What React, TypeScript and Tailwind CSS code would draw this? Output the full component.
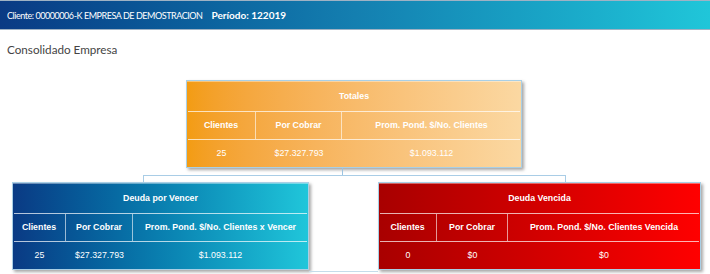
import React from "react";

type BoxProps = {
    title: string;
    headers: string[];
    values: string[];
    bg: string;
    cols: string;
    width: string;
};

function Box({ title, headers, values, bg, cols, width }: BoxProps) {
    return (
        <div className={`${width} ${bg} h-[88px] border border-[#a9cfe5] shadow-[2px_2px_3px_rgba(0,0,0,0.35)] flex flex-col text-white font-['Liberation_Sans',Arial,sans-serif] text-[8.8px]`}>
            <div className="h-[30px] flex items-center justify-center font-bold border-t border-white/40">{title}</div>
            <div className="h-px mx-px bg-white/70" />
            <div className={`grid ${cols} h-[27px] font-bold`}>
                {headers.map((h, i) => (
                    <div key={h} className={`flex items-center justify-center ${i < headers.length - 1 ? "border-r border-white/60" : ""}`}>
                        {h}
                    </div>
                ))}
            </div>
            <div className="h-px mx-px bg-white/70" />
            <div className={`grid ${cols} flex-1`}>
                {values.map((v, i) => (
                    <div key={i} className="flex items-center justify-center">{v}</div>
                ))}
            </div>
        </div>
    );
}

export default function App() {
    return (
        <div className="w-[710px] h-[274px] bg-white overflow-hidden">
            <div className="h-[30px] border-t border-[#9fb2c4] border-b border-[#5fd2e2] bg-gradient-to-r from-[#0a3a84] via-[#147fb0] to-[#20c6d9] flex items-center px-[7px] pt-px text-white font-['Lato',sans-serif]">
                <span className="text-[9px] tracking-[-0.45px]">Cliente: 00000006-K EMPRESA DE DEMOSTRACION</span>
                <span className="ml-[9px] text-[10px] font-bold">Período: 122019</span>
            </div>

            <div className="mt-[9px] px-[7px] leading-[20px] text-[11.7px] text-[#444] font-['Lato',sans-serif]">
                Consolidado Empresa
            </div>

            <div className="mt-[21px] ml-[186px]">
                <Box
                    title="Totales"
                    headers={["Clientes", "Por Cobrar", "Prom. Pond. $/No. Clientes"]}
                    values={["25", "$27.327.793", "$1.093.112"]}
                    bg="bg-gradient-to-r from-[#f39c12] to-[#fbd8a2]"
                    cols="grid-cols-[69px_86px_1fr]"
                    width="w-[336px]"
                />
            </div>

            {/* connectors */}
            <div className="ml-[342px] w-px h-[7px] bg-[#9cc3e0]" />
            <div className="ml-[143px] w-[423px] h-[7px] border-t border-x border-[#a9cde6]" />

            <div className="flex">
                <div className="ml-[12px]">
                    <Box
                        title="Deuda por Vencer"
                        headers={["Clientes", "Por Cobrar", "Prom. Pond. $/No. Clientes x Vencer"]}
                        values={["25", "$27.327.793", "$1.093.112"]}
                        bg="bg-gradient-to-r from-[#0a3a84] to-[#20c6da]"
                        cols="grid-cols-[53px_67px_1fr]"
                        width="w-[297px]"
                    />
                </div>
                <div className="w-[69px] h-[90px] border-b border-[#c5dcea]" />
                <Box
                    title="Deuda Vencida"
                    headers={["Clientes", "Por Cobrar", "Prom. Pond. $/No. Clientes Vencida"]}
                    values={["0", "$0", "$0"]}
                    bg="bg-gradient-to-r from-[#a80000] to-[#ff0000]"
                    cols="grid-cols-[58px_71px_1fr]"
                    width="w-[323px]"
                />
            </div>
        </div>
    );
}
